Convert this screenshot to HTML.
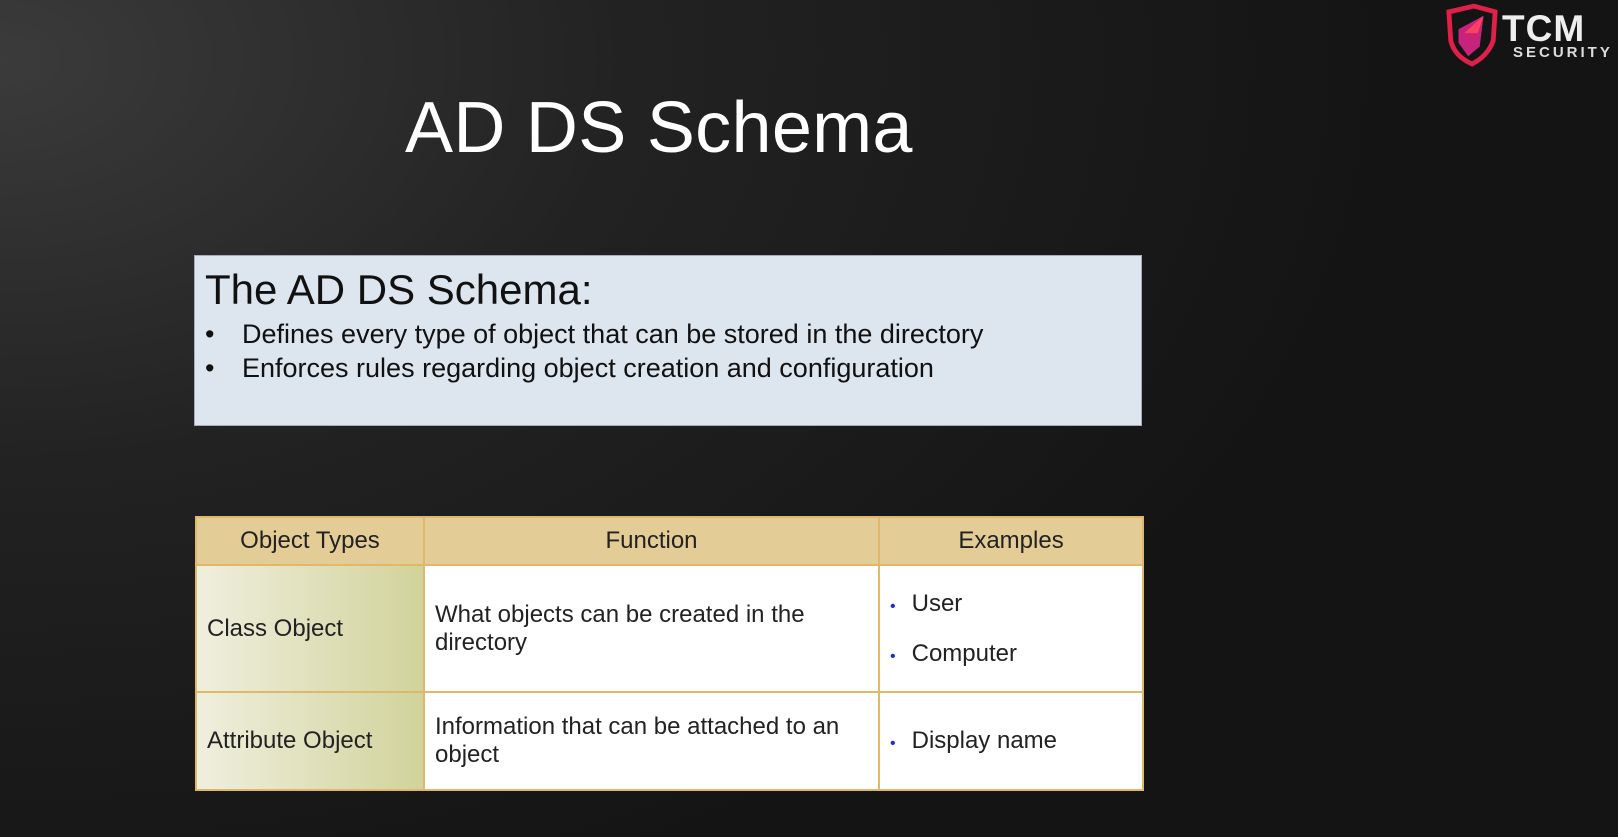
<!DOCTYPE html>
<html><head><meta charset="utf-8"><style>
body{margin:0;width:1618px;height:837px;overflow:hidden;background:radial-gradient(ellipse 1400px 900px at 0px 60px,#3b3b3b 0%,#222 45%,#141414 100%);font-family:"Liberation Sans",sans-serif;position:relative}
.t{position:absolute;left:405px;top:87px;font-size:72px;color:#fff;letter-spacing:0.3px;font-weight:normal}
.box{position:absolute;left:194px;top:255px;width:946px;height:169px;background:#dde5ef;border:1px solid #aab;}
.box h2{margin:0;position:absolute;left:10px;top:10px;font-weight:normal;font-size:42px;color:#111}
.box .l{position:absolute;left:10px;font-size:27px;color:#111}
.box .l span{position:absolute;left:37px;white-space:nowrap}
table{position:absolute;left:195px;top:516px;border-collapse:collapse;font-size:24px;color:#222}
td{border:2px solid #e0b868;padding:0 10px;vertical-align:middle;background:#fff}
tr.h td{background:#e4cc96;text-align:center;height:46px}
td.c{background:linear-gradient(90deg,#efefde,#d1d39b)}
.b{color:#1b2fd0;font-size:16px;margin-right:16px}
</style></head><body>
<div class="t">AD DS Schema</div>
<svg style="position:absolute;left:1445px;top:3px" width="54" height="64" viewBox="0 0 56 64"><path d="M4 8 L30 2 L52 8 L50 38 Q44 54 28 62 Q10 54 6 38 Z" fill="none" stroke="#e0204a" stroke-width="5"/><path d="M14 26 L40 12 L36 44 L24 54 L14 40Z" fill="#c8237a"/><path d="M40 12 L34 30 L20 30Z" fill="#ff4060"/></svg>
<div style="position:absolute;left:1502px;top:8px;color:#eee;font-size:37px;font-weight:bold;letter-spacing:1px">TCM</div>
<div style="position:absolute;left:1513px;top:44px;color:#ddd;font-size:15px;font-weight:bold;letter-spacing:3px">SECURITY</div>
<div class="box"><h2>The AD DS Schema:</h2>
<div class="l" style="top:63px">•<span>Defines every type of object that can be stored in the directory</span></div>
<div class="l" style="top:97px">•<span>Enforces rules regarding object creation and configuration</span></div></div>
<table>
<tr class="h"><td style="width:206px">Object Types</td><td style="width:433px">Function</td><td style="width:242px">Examples</td></tr>
<tr style="height:127px"><td class="c">Class Object</td><td style="line-height:28px">What objects can be created in the<br>directory</td><td><div style="margin-bottom:22px"><span class="b">•</span>User</div><div><span class="b">•</span>Computer</div></td></tr>
<tr style="height:98px"><td class="c">Attribute Object</td><td style="line-height:28px">Information that can be attached to an<br>object</td><td><span class="b">•</span>Display name</td></tr>
</table>
</body></html>
